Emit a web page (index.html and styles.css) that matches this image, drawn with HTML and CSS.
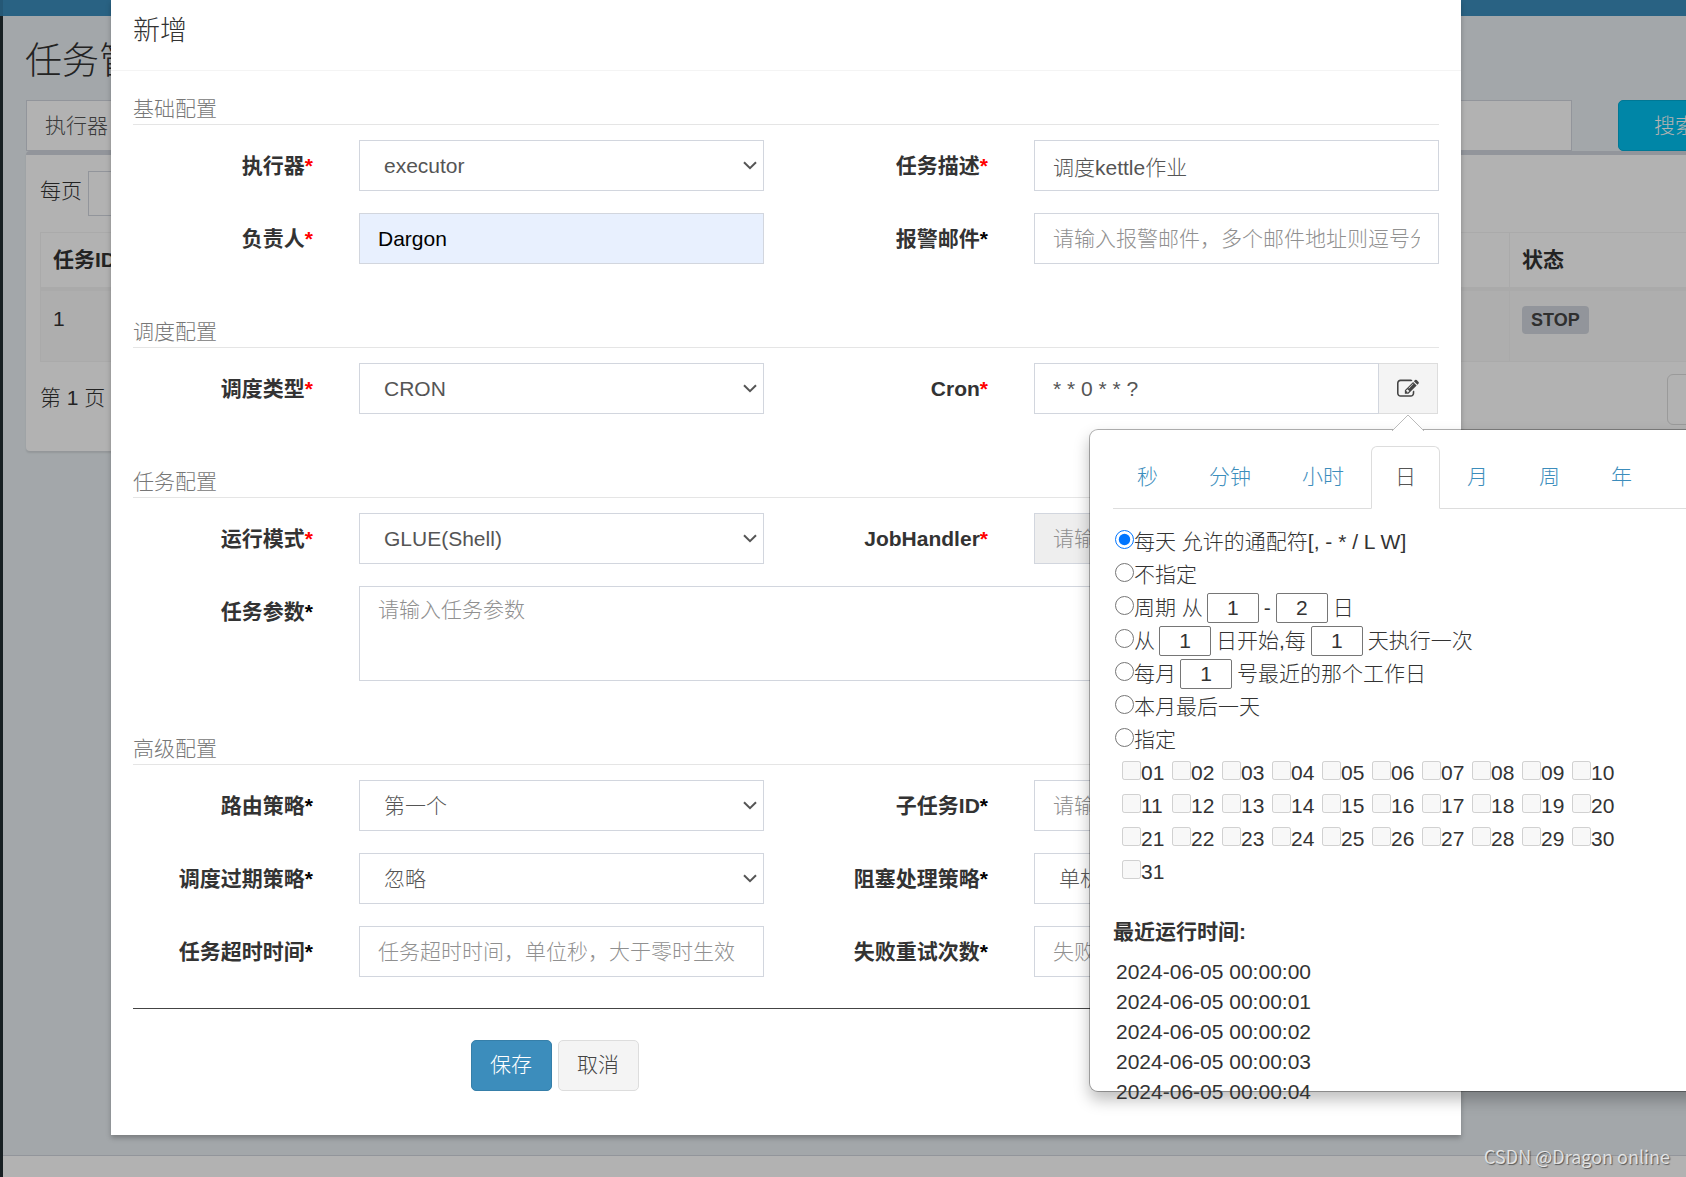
FILE: index.html
```html
<!DOCTYPE html>
<html lang="zh-CN">
<head>
<meta charset="utf-8">
<meta name="viewport" content="width=device-width, initial-scale=1">
<title>任务管理</title>
<link rel="stylesheet" href="styles.css">
</head>
<body>
<div class="app">
  <aside class="sidebar"><div class="sidebar-logo"></div></aside>
  <div class="page">
    <header class="topbar"></header>
    <main class="content">
      <h1 class="page-title">任务管理</h1>
      <div class="filters">
        <span class="filter-addon">执行器</span>
        <input class="filter-input" type="text" aria-label="负责人">
        <button class="search-button" type="button">搜索</button>
      </div>
      <section class="box">
        <div class="page-size">
          <label for="page-size">每页</label>
          <select id="page-size" class="page-size-select"><option></option></select>
        </div>
        <table class="jobs">
          <thead><tr><th>任务ID</th><th class="col-status">状态</th></tr></thead>
          <tbody><tr><td>1</td><td class="col-status"><span class="badge">STOP</span></td></tr></tbody>
        </table>
        <div class="pager">
          <span>第 1 页</span>
          <button class="pager-button" type="button" aria-label="上页"></button>
        </div>
      </section>
    </main>
    <footer class="footer"></footer>
  </div>
</div>

<div class="backdrop">
  <div class="modal" role="dialog" aria-labelledby="modal-title">
    <header class="modal-header"><h2 id="modal-title" class="modal-title">新增</h2></header>
    <form class="form">
      <section class="group">
        <h3 class="group-title">基础配置</h3>
        <div class="row">
          <label class="label" for="executor">执行器<span class="required">*</span></label>
          <div class="field select">
            <select id="executor" class="control"><option>executor</option></select>
            <svg class="chevron" viewBox="0 0 14 9" aria-hidden="true"><path d="M1 1.2 7 7.2 13 1.2"/></svg>
          </div>
          <label class="label" for="desc">任务描述<span class="required">*</span></label>
          <div class="field"><input id="desc" class="control" type="text" value="调度kettle作业"></div>
        </div>
        <div class="row">
          <label class="label" for="author">负责人<span class="required">*</span></label>
          <div class="field"><input id="author" class="control autofilled" type="text" value="Dargon"></div>
          <label class="label" for="email">报警邮件<span class="optional">*</span></label>
          <div class="field"><input id="email" class="control" type="text" placeholder="请输入报警邮件，多个邮件地址则逗号分隔"></div>
        </div>
      </section>

      <section class="group">
        <h3 class="group-title">调度配置</h3>
        <div class="row">
          <label class="label" for="schedule">调度类型<span class="required">*</span></label>
          <div class="field select">
            <select id="schedule" class="control"><option>CRON</option></select>
            <svg class="chevron" viewBox="0 0 14 9" aria-hidden="true"><path d="M1 1.2 7 7.2 13 1.2"/></svg>
          </div>
          <label class="label" for="cron">Cron<span class="required">*</span></label>
          <div class="field cron">
            <input id="cron" class="control" type="text" value="* * 0 * * ?">
            <button class="cron-button" type="button" aria-label="编辑 Cron">
              <svg class="edit-icon" viewBox="0 0 1792 1792" aria-hidden="true"><path d="M888 1184l116-116-152-152-116 116v56h96v96h56zm440-720q-16-16-33 1l-350 350q-17 17-1 33t33-1l350-350q17-17 1-33zm80 594v190q0 119-84.500 203.500t-203.500 84.500h-832q-119 0-203.500-84.500t-84.500-203.500v-832q0-119 84.500-203.500t203.500-84.500h832q63 0 117 25 15 7 18 23 3 17-9 29l-49 49q-14 14-32 8-23-6-45-6h-832q-66 0-113 47t-47 113v832q0 66 47 113t113 47h832q66 0 113-47t47-113v-126q0-13 9-22l64-64q15-15 35-7t20 29zm-96-738l288 288-672 672h-288v-288zm444 132l-92 92-288-288 92-92q28-28 68-28t68 28l152 152q28 28 28 68t-28 68z"/></svg>
            </button>
            <div class="popover">
              <svg class="arrow" viewBox="0 0 32 17" aria-hidden="true"><path d="M0 17 16 1 32 17"/></svg>
              <nav class="tabs">
                <a class="tab" href="#second">秒</a>
                <a class="tab" href="#minute">分钟</a>
                <a class="tab" href="#hour">小时</a>
                <a class="tab active" href="#day">日</a>
                <a class="tab" href="#month">月</a>
                <a class="tab" href="#week">周</a>
                <a class="tab" href="#year">年</a>
              </nav>
              <div class="rules">
                <div class="rule"><input id="r1" class="tick" type="radio" name="day" checked><label for="r1">每天 允许的通配符[, - * / L W]</label></div>
                <div class="rule"><input id="r2" class="tick" type="radio" name="day"><label for="r2">不指定</label></div>
                <div class="rule"><input id="r3" class="tick" type="radio" name="day"><label for="r3">周期 从</label><input class="number" type="text" value="1" aria-label="起始日"><span>-</span><input class="number" type="text" value="2" aria-label="结束日"><span>日</span></div>
                <div class="rule"><input id="r4" class="tick" type="radio" name="day"><label for="r4">从</label><input class="number" type="text" value="1" aria-label="开始日"><span>日开始,每</span><input class="number" type="text" value="1" aria-label="间隔天数"><span>天执行一次</span></div>
                <div class="rule"><input id="r5" class="tick" type="radio" name="day"><label for="r5">每月</label><input class="number" type="text" value="1" aria-label="工作日"><span>号最近的那个工作日</span></div>
                <div class="rule"><input id="r6" class="tick" type="radio" name="day"><label for="r6">本月最后一天</label></div>
                <div class="rule"><input id="r7" class="tick" type="radio" name="day"><label for="r7">指定</label></div>
              </div>
              <div class="days">
                <label class="day"><input class="tick" type="checkbox" disabled>01</label>
                <label class="day"><input class="tick" type="checkbox" disabled>02</label>
                <label class="day"><input class="tick" type="checkbox" disabled>03</label>
                <label class="day"><input class="tick" type="checkbox" disabled>04</label>
                <label class="day"><input class="tick" type="checkbox" disabled>05</label>
                <label class="day"><input class="tick" type="checkbox" disabled>06</label>
                <label class="day"><input class="tick" type="checkbox" disabled>07</label>
                <label class="day"><input class="tick" type="checkbox" disabled>08</label>
                <label class="day"><input class="tick" type="checkbox" disabled>09</label>
                <label class="day"><input class="tick" type="checkbox" disabled>10</label>
                <label class="day"><input class="tick" type="checkbox" disabled>11</label>
                <label class="day"><input class="tick" type="checkbox" disabled>12</label>
                <label class="day"><input class="tick" type="checkbox" disabled>13</label>
                <label class="day"><input class="tick" type="checkbox" disabled>14</label>
                <label class="day"><input class="tick" type="checkbox" disabled>15</label>
                <label class="day"><input class="tick" type="checkbox" disabled>16</label>
                <label class="day"><input class="tick" type="checkbox" disabled>17</label>
                <label class="day"><input class="tick" type="checkbox" disabled>18</label>
                <label class="day"><input class="tick" type="checkbox" disabled>19</label>
                <label class="day"><input class="tick" type="checkbox" disabled>20</label>
                <label class="day"><input class="tick" type="checkbox" disabled>21</label>
                <label class="day"><input class="tick" type="checkbox" disabled>22</label>
                <label class="day"><input class="tick" type="checkbox" disabled>23</label>
                <label class="day"><input class="tick" type="checkbox" disabled>24</label>
                <label class="day"><input class="tick" type="checkbox" disabled>25</label>
                <label class="day"><input class="tick" type="checkbox" disabled>26</label>
                <label class="day"><input class="tick" type="checkbox" disabled>27</label>
                <label class="day"><input class="tick" type="checkbox" disabled>28</label>
                <label class="day"><input class="tick" type="checkbox" disabled>29</label>
                <label class="day"><input class="tick" type="checkbox" disabled>30</label>
                <label class="day"><input class="tick" type="checkbox" disabled>31</label>
              </div>
              <h4 class="runs-title">最近运行时间:</h4>
              <ul class="runs">
                <li>2024-06-05 00:00:00</li>
                <li>2024-06-05 00:00:01</li>
                <li>2024-06-05 00:00:02</li>
                <li>2024-06-05 00:00:03</li>
                <li>2024-06-05 00:00:04</li>
              </ul>
            </div>
          </div>
        </div>
      </section>

      <section class="group">
        <h3 class="group-title">任务配置</h3>
        <div class="row">
          <label class="label" for="mode">运行模式<span class="required">*</span></label>
          <div class="field select">
            <select id="mode" class="control"><option>GLUE(Shell)</option></select>
            <svg class="chevron" viewBox="0 0 14 9" aria-hidden="true"><path d="M1 1.2 7 7.2 13 1.2"/></svg>
          </div>
          <label class="label" for="handler">JobHandler<span class="required">*</span></label>
          <div class="field"><input id="handler" class="control" type="text" placeholder="请输入JobHandler" disabled></div>
        </div>
        <div class="row">
          <label class="label" for="params">任务参数<span class="optional">*</span></label>
          <div class="field wide"><textarea id="params" class="control area" placeholder="请输入任务参数"></textarea></div>
        </div>
      </section>

      <section class="group">
        <h3 class="group-title">高级配置</h3>
        <div class="row">
          <label class="label" for="route">路由策略<span class="optional">*</span></label>
          <div class="field select">
            <select id="route" class="control"><option>第一个</option></select>
            <svg class="chevron" viewBox="0 0 14 9" aria-hidden="true"><path d="M1 1.2 7 7.2 13 1.2"/></svg>
          </div>
          <label class="label" for="child">子任务ID<span class="optional">*</span></label>
          <div class="field"><input id="child" class="control" type="text" placeholder="请输入子任务的任务ID"></div>
        </div>
        <div class="row">
          <label class="label" for="misfire">调度过期策略<span class="optional">*</span></label>
          <div class="field select">
            <select id="misfire" class="control"><option>忽略</option></select>
            <svg class="chevron" viewBox="0 0 14 9" aria-hidden="true"><path d="M1 1.2 7 7.2 13 1.2"/></svg>
          </div>
          <label class="label" for="block">阻塞处理策略<span class="optional">*</span></label>
          <div class="field select">
            <select id="block" class="control"><option>单机串行</option></select>
            <svg class="chevron" viewBox="0 0 14 9" aria-hidden="true"><path d="M1 1.2 7 7.2 13 1.2"/></svg>
          </div>
        </div>
        <div class="row">
          <label class="label" for="timeout">任务超时时间<span class="optional">*</span></label>
          <div class="field"><input id="timeout" class="control" type="text" placeholder="任务超时时间，单位秒，大于零时生效"></div>
          <label class="label" for="retry">失败重试次数<span class="optional">*</span></label>
          <div class="field"><input id="retry" class="control" type="text" placeholder="失败重试次数"></div>
        </div>
      </section>

      <hr class="divider">
      <div class="actions">
        <button class="button primary" type="button">保存</button>
        <button class="button" type="button">取消</button>
      </div>
    </form>
  </div>
</div>
<div class="watermark">CSDN @Dragon online</div>
</body>
</html>
```
FILE: styles.css
```css
* { box-sizing: border-box; }
body {
  margin: 0;
  overflow: hidden;
  color: #333;
  font: 300 21px/30px "Liberation Sans", "Noto Sans CJK SC", sans-serif;
}
h1, h2, h3, h4, ul { margin: 0; padding: 0; font-weight: 300; }
input, select, textarea, button { margin: 0; color: inherit; font: inherit; }

/* page behind the dialog */
.app { display: flex; min-height: 100vh; overflow: hidden; }
.sidebar { width: 3px; background: #222d32; }
.sidebar-logo { height: 16px; background: #367fa9; }
.page { display: flex; flex: 1; flex-direction: column; min-width: 0; background: #eaf0f4; }
.topbar { height: 16px; background: #3c8dbc; }
.content { flex: 1; padding: 21px 0 0 22px; }
.page-title { font-size: 37px; line-height: 50px; }
.filters { display: flex; height: 51px; margin: 13px 0 0 1px; }
.filter-addon { padding: 10px 18px; border: 1px solid #d2d6de; background: #fff; color: #555; line-height: 30px; }
.filter-input { flex: 1; min-width: 0; border: 1px solid #d2d6de; background: #fff; }
.search-button {
  flex: none;
  width: 158px;
  margin: 0 -90px 0 46px;
  border: 1px solid #00acd6;
  border-radius: 5px;
  background: #00c0ef;
  color: #fff;
  padding: 0 35px;
  text-align: left;
}
.box {
  margin-left: 1px;
  padding: 16px 0 26px 14px;
  border-top: 4px solid #d2d6de;
  border-radius: 4px 0 0 4px;
  background: #fff;
  box-shadow: 0 2px 2px rgba(0, 0, 0, .1);
}
.page-size { display: flex; gap: 6px; }
.page-size label { line-height: 40px; }
.page-size-select { width: 110px; height: 45px; border: 1px solid #d2d6de; background: #fff; appearance: none; }
.jobs { width: 100%; margin-top: 16px; border-spacing: 0; border: 1px solid #f4f4f4; border-right: 0; }
.jobs th { height: 58px; padding: 0 12px; border-bottom: 4px solid #f4f4f4; text-align: left; font-weight: 700; }
.jobs td { height: 70px; padding: 13px 12px; background: #f9f9f9; vertical-align: top; }
.jobs .col-status { width: 177px; border-left: 1px solid #f4f4f4; }
.badge { display: inline-block; padding: 0 9px; border-radius: 4px; background: #d2d6de; color: #444; font-size: 18px; font-weight: 700; line-height: 28px; }
.pager { display: flex; justify-content: space-between; margin-top: 12px; line-height: 48px; }
.pager-button { width: 80px; height: 51px; margin-right: -61px; border: 1px solid #ddd; border-radius: 6px; background: #fff; }
.footer { height: 22px; border-top: 1px solid #d2d6de; background: #fff; }

/* dialog */
.backdrop { position: absolute; inset: 0; padding: 0 225px 0 111px; overflow: hidden; background: rgba(0, 0, 0, .3); }
.modal { background: #fff; box-shadow: 0 3px 5px rgba(0, 0, 0, .25); }
.modal-header { padding: 11px 22px 19px; border-bottom: 1px solid #f4f4f4; }
.modal-title { font-size: 27px; line-height: 40px; }
.form { padding: 21px 0 44px; }
.group + .group { margin-top: 51px; }
.group-title { margin: 0 22px 15px; padding-top: 2px; border-bottom: 1px solid #e5e5e5; color: #777; font-size: 21px; line-height: 30px; }
.row { display: grid; grid-template-columns: 1fr 2fr 1fr 2fr; }
.row + .row { margin-top: 22px; }
.label { padding: 11px 23px 0 0; text-align: right; font-weight: 700; }
.required { color: red; }
.optional { color: #000; }
.field { position: relative; display: flex; min-width: 0; padding: 0 22px 0 23px; }
.wide { grid-column: 2 / 5; }
.control {
  flex: 1;
  min-width: 0;
  width: 100%;
  height: 51px;
  padding: 0 18px;
  border: 1px solid #d2d6de;
  border-radius: 0;
  background: #fff;
  color: #555;
  appearance: none;
}
.control::placeholder { color: #909090; opacity: 1; }
.control:disabled { background: #eee; }
.autofilled { background: #e8f0fe; color: #000; }
.select .control { padding-left: 24px; }
.area { height: 95px; padding: 8px 18px; resize: none; }
.chevron { position: absolute; top: 21px; right: 29px; width: 14px; height: 9px; fill: none; stroke: #555; stroke-width: 2; }
.divider { margin: 31px 22px; border: 0; border-top: 1px solid #444; }
.actions { display: flex; gap: 6px; padding-left: calc(25% + 22px); }
.button { min-width: 81px; height: 51px; padding: 0 18px 2px; border: 1px solid #ddd; border-radius: 5px; background: #f4f4f4; color: #444; }
.primary { border-color: #367fa9; background: #3c8dbc; color: #fff; }

/* cron editor */
.cron { padding-right: 23px; }
.cron-button { display: grid; place-items: center; width: 59px; border: 1px solid #ddd; border-left: 0; background: #f4f4f4; color: #444; }
.edit-icon { width: 22px; height: 22px; fill: currentColor; }
.popover {
  position: absolute;
  z-index: 2;
  top: 66px;
  left: 78px;
  width: 720px;
  height: 663px;
  padding: 16px 23px;
  border: 1px solid rgba(0, 0, 0, .3);
  border-radius: 9px;
  background: #fff;
  background-clip: padding-box;
  box-shadow: 0 8px 15px rgba(0, 0, 0, .25);
}
.arrow { position: absolute; top: -16px; left: 302px; width: 32px; height: 17px; fill: #fff; stroke: #bbb; stroke-width: 1; }
.tabs { display: flex; gap: 3px; border-bottom: 1px solid #ddd; }
.tab { margin-bottom: -1px; padding: 14px 23px 16px; border: 1px solid transparent; border-radius: 6px 6px 0 0; color: #3c8dbc; line-height: 31px; text-decoration: none; }
.active { border-color: #ddd #ddd #fff; background: #fff; color: #555; }
.rules { margin-top: 16px; padding-left: 2px; }
.rule { display: flex; align-items: center; gap: 5px; height: 33px; white-space: nowrap; }
.rule label { margin-right: -1px; }
.tick { flex: none; width: 19px; height: 19px; margin: 0 0 4px; }
.rule .tick { margin-right: -5px; }
.number { width: 52px; height: 30px; padding: 0; border: 1px solid #767676; border-radius: 2px; background: #fff; text-align: center; }
.days { display: grid; grid-template-columns: repeat(10, 50px); padding-left: 9px; }
.day { display: flex; align-items: center; height: 33px; }
.runs-title { margin-top: 29px; font-size: 21px; font-weight: 700; line-height: 30px; }
.runs { margin-top: 10px; padding-left: 3px; list-style: none; }

.watermark { position: absolute; right: 16px; bottom: 6px; color: rgba(255, 255, 255, .75); font: 18px/30px "Noto Sans CJK SC", sans-serif; text-shadow: 1px 1px 1px rgba(0, 0, 0, .5); }
```
